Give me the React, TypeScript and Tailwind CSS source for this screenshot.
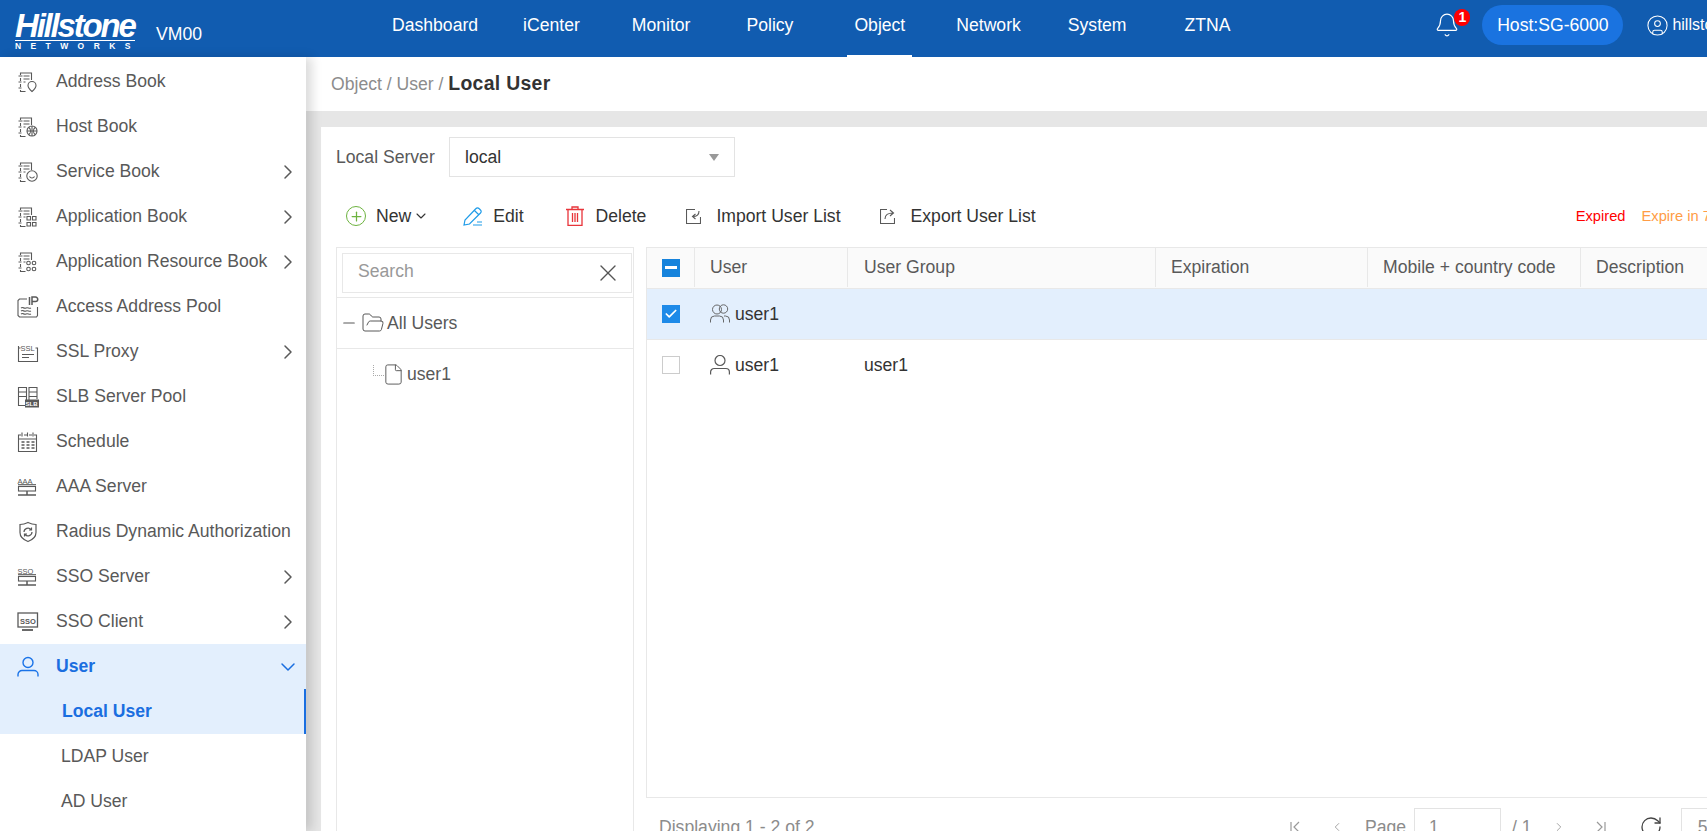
import { ChevronRight, ChevronDown, ChevronLeft, X, Check, Minus, Plus, FolderOpen, File, Bell, CircleUser, RotateCw } from 'lucide-react'
import type { ReactNode } from 'react'

const base = (extra: ReactNode) => (
  <svg width="22" height="22" viewBox="0 0 22 22" fill="none" stroke="#595959" strokeWidth="1.1">
    <path d="M3.5 4V2h11v7M3.5 7v3M3.5 13v3M3.5 19v1.500h5M1.500 5h4M1.500 11h3M1.500 17h3M6.500 5h6M6.500 8h6M6.500 11h2" />
    {extra}
  </svg>
)

const icons: Record<string, ReactNode> = {
  address: base(<path d="M15 10.500a4 4 0 0 1 4 4c0 2.500-4 6-4 6s-4-3.500-4-6a4 4 0 0 1 4-4z" />),
  host: base(<><circle cx="15" cy="15" r="5" /><path d="M10 15h10M15 10v10M12 11.500c2 2 2 5 0 7M18 11.500c-2 2-2 5 0 7" /></>),
  service: base(<><circle cx="15" cy="15" r="5.200" /><path d="M12.500 15.500c1 2 4 2 5 0" /></>),
  app: base(<path d="M10 10.500h3.500v3.500H10zM15.500 10.500H19v3.500h-3.500zM10 16.500h3.500V20H10zM15.500 16.500H19V20h-3.500z" />),
  res: base(<><circle cx="11.500" cy="12" r="1.800" /><circle cx="17" cy="12" r="1.800" /><circle cx="11.500" cy="18" r="1.800" /><circle cx="17" cy="18" r="1.800" /></>),
  pool: (
    <svg width="22" height="22" viewBox="0 0 22 22" fill="none" stroke="#595959" strokeWidth="1.1">
      <path d="M10 3H2.500L1 4.500v15L2.500 21h17l1-1.500V11" />
      <path d="M4 12c2-1.500 3 1 5 0s3 1 5 0M4 15c2-1.500 3 1 5 0s3 1 5 0M4 18c2-1.500 3 1 5 0s3 1 5 0" />
      <path d="M12.500 1v8M15 9V1h3.500a2.200 2.200 0 0 1 0 4.500H15" strokeWidth="1.500" />
    </svg>
  ),
  ssl: (
    <svg width="22" height="22" viewBox="0 0 22 22" fill="none" stroke="#595959" strokeWidth="1.1">
      <path d="M1.500 5v15.500h19V7h-2M1.500 7h2M5 13.500h12M5 16.500h7" />
      <text x="3.500" y="9.500" fontSize="7.500" fill="#595959" stroke="none" fontFamily="Liberation Sans">SSL</text>
    </svg>
  ),
  slb: (
    <svg width="22" height="22" viewBox="0 0 22 22" fill="none" stroke="#595959" strokeWidth="1.1">
      <path d="M1.500 1.500h8v18h-8zM1.500 6h8M1.500 10.500h8M12 17V1.500h8V13M12 6h8M12 10.500h8" />
      <rect x="8" y="13.500" width="14" height="8" fill="#595959" stroke="none" />
      <text x="8.500" y="20" fontSize="6" fontWeight="700" fill="#fff" stroke="none" fontFamily="Liberation Sans">SLB</text>
    </svg>
  ),
  schedule: (
    <svg width="22" height="22" viewBox="0 0 22 22" fill="none" stroke="#595959" strokeWidth="1.1">
      <path d="M4 4H1.500v16.500h18V4H17M7 4h3M12 4h3M5 1.500v4M10.500 1.500v4M16 1.500v4M1.500 8h18" />
      <path d="M4.500 11h3M9.500 11h3M14.500 11h3M4.500 14h3M9.500 14h3M14.500 14h3M4.500 17h3M9.500 17h3M14.500 17h3" strokeWidth="1.500" />
    </svg>
  ),
  aaa: (
    <svg width="22" height="22" viewBox="0 0 22 22" fill="none" stroke="#595959" strokeWidth="1.1">
      <text x="0.500" y="7.500" fontSize="7.500" fill="#595959" stroke="none" fontFamily="Liberation Sans">AAA</text>
      <path d="M1 8.700h18" />
      <rect x="1.500" y="10.500" width="17" height="4.500" />
      <path d="M10 15v3.500M1 19h18" strokeWidth="1.500" />
    </svg>
  ),
  radius: (
    <svg width="22" height="22" viewBox="0 0 22 22" fill="none" stroke="#595959" strokeWidth="1.200">
      <path d="M11 1.500c3 1.500 6 2 8 2v8c0 5-4 7.500-8 9-4-1.500-8-4-8-9v-8c2 0 5-.5 8-2z" />
      <path d="M7 11a4 4 0 0 1 7-2.500M15 11a4 4 0 0 1-7 2.500M14.500 6.500v2.500h-2.500M7.500 15.500V13H10" />
    </svg>
  ),
  ssoServer: (
    <svg width="22" height="22" viewBox="0 0 22 22" fill="none" stroke="#595959" strokeWidth="1.100">
      <text x="0.500" y="7.500" fontSize="7.500" fill="#595959" stroke="none" fontFamily="Liberation Sans">SSO</text>
      <path d="M1 8.700h18" />
      <rect x="1.500" y="10.500" width="17" height="4.500" />
      <path d="M10 15v3.500M1 19h18" strokeWidth="1.500" />
    </svg>
  ),
  ssoClient: (
    <svg width="22" height="22" viewBox="0 0 22 22" fill="none" stroke="#595959" strokeWidth="1.300">
      <rect x="1" y="2" width="19.500" height="14" />
      <path d="M5 19h11" strokeWidth="1.800" />
      <text x="3" y="12.500" fontSize="7.500" fontWeight="700" fill="#595959" stroke="none" fontFamily="Liberation Sans">SSO</text>
    </svg>
  ),
  user: (
    <svg width="22" height="22" viewBox="0 0 22 22" fill="none" stroke="#1a73e8" strokeWidth="1.400">
      <circle cx="11" cy="6.500" r="5" />
      <path d="M1 20.500v-2a4 4 0 0 1 4-4h12a4 4 0 0 1 4 4v2" />
    </svg>
  ),
}

const menu = [
  { label: 'Address Book', icon: 'address' },
  { label: 'Host Book', icon: 'host' },
  { label: 'Service Book', icon: 'service', more: true },
  { label: 'Application Book', icon: 'app', more: true },
  { label: 'Application Resource Book', icon: 'res', more: true },
  { label: 'Access Address Pool', icon: 'pool' },
  { label: 'SSL Proxy', icon: 'ssl', more: true },
  { label: 'SLB Server Pool', icon: 'slb' },
  { label: 'Schedule', icon: 'schedule' },
  { label: 'AAA Server', icon: 'aaa' },
  { label: 'Radius Dynamic Authorization', icon: 'radius' },
  { label: 'SSO Server', icon: 'ssoServer', more: true },
  { label: 'SSO Client', icon: 'ssoClient', more: true },
]

const nav = [
  { label: 'Dashboard', cls: 'border-transparent' },
  { label: 'iCenter', cls: 'ml-[45px] border-transparent' },
  { label: 'Monitor', cls: 'ml-[52px] border-transparent' },
  { label: 'Policy', cls: 'ml-[56px] border-transparent' },
  { label: 'Object', cls: 'ml-[54px] px-[7px] border-white' },
  { label: 'Network', cls: 'ml-[44px] border-transparent' },
  { label: 'System', cls: 'ml-[47px] border-transparent' },
  { label: 'ZTNA', cls: 'ml-[58px] border-transparent' },
]

function Sidebar() {
  return (
    <aside className="w-[306px] shrink-0 bg-white pt-[2px] z-10 shadow-[6px_0_10px_rgba(0,0,0,0.14)] text-[#595959]">
      {menu.map((m) => (
        <div key={m.label} className="h-[45px] flex items-center pl-[17px] pr-[6px]">
          <span className="w-[22px] flex justify-center">{icons[m.icon]}</span>
          <span className="ml-[17px] flex-1 whitespace-nowrap">{m.label}</span>
          {m.more && <ChevronRight size={24} strokeWidth={1.5} className="text-[#595959]" />}
        </div>
      ))}
      <div className="bg-[#e3effd] text-[#1a6ee0] font-bold">
        <div className="h-[45px] flex items-center pl-[17px] pr-[6px]">
          <span className="w-[22px] flex justify-center">{icons.user}</span>
          <span className="ml-[17px] flex-1">User</span>
          <ChevronDown size={24} strokeWidth={1.5} />
        </div>
        <div className="h-[45px] flex items-center pl-[62px] border-r-2 border-[#1a6ee0]">Local User</div>
      </div>
      <div className="h-[45px] flex items-center pl-[61px]">LDAP User</div>
      <div className="h-[45px] flex items-center pl-[61px]">AD User</div>
    </aside>
  )
}

function Box({ children, className }: { children?: ReactNode; className: string }) {
  return <span className={`w-[18px] h-[18px] flex items-center justify-center ${className}`}>{children}</span>
}

function Pager() {
  return (
    <div className="flex items-center mt-[10px] h-[38px] text-[#8c8c8c] whitespace-nowrap">
      <span className="w-[644px] shrink-0 pl-[13px]">Displaying 1 - 2 of 2</span>
      <svg width="10" height="12" viewBox="0 0 10 12" fill="none" stroke="#999" strokeWidth="1.200"><path d="M1 1v10M9 1L4 6l5 5" /></svg>
      <ChevronLeft size={14} strokeWidth={1.5} className="ml-[30px] text-[#999]" />
      <span className="ml-[21px]">Page</span>
      <div className="ml-[8px] self-start shrink-0 w-[87px] h-10 border border-[#e3e3e3] pl-[14px] pt-[5px]">1</div>
      <span className="ml-[11px]">/ 1</span>
      <ChevronRight size={14} strokeWidth={1.5} className="ml-[20px] text-[#999]" />
      <svg className="ml-[30px]" width="10" height="12" viewBox="0 0 10 12" fill="none" stroke="#999" strokeWidth="1.200"><path d="M9 1v10M1 1l5 5-5 5" /></svg>
      <RotateCw size={24} strokeWidth={1.3} className="ml-[33px] text-[#444]" />
      <div className="ml-[18px] self-start shrink-0 w-[80px] h-10 border border-[#e3e3e3] pl-[16px] pt-[5px]">50</div>
    </div>
  )
}

export default function App() {
  return (
    <div className="w-[1707px] h-[831px] overflow-hidden flex flex-col bg-white text-[17.6px] text-[#333] font-['Liberation_Sans',Arial,sans-serif]">
      {/* Header */}
      <header className="h-[57px] shrink-0 bg-[#115cb0] text-white flex items-center whitespace-nowrap">
        <div className="w-[156px] pl-[15px] pt-[5px] shrink-0">
          <div className="italic font-bold text-[33px] leading-[29px] tracking-[-2.2px]">Hillstone</div>
          <div className="w-[120px] border-t border-white text-[8.5px] font-bold leading-[11px] tracking-[9.4px]">NETWORKS</div>
        </div>
        <span className="mt-[12px] w-[236px] shrink-0">VM00</span>
        <nav className="flex h-full">
          {nav.map((n) => (
            <div key={n.label} className={`h-full flex items-center pb-[5px] border-b-2 ${n.cls}`}>
              {n.label}
            </div>
          ))}
        </nav>
        <div className="flex items-center mb-[7px] ml-[204px]">
          <div className="relative w-[26px] h-[26px]">
            <Bell size={26} strokeWidth={1.1} />
            <span className="absolute -top-[3px] left-[20px] w-4 h-[17px] rounded-full bg-[#f00] text-[14px] font-bold leading-[17px] text-center">1</span>
          </div>
          <div className="ml-[22px] h-10 w-[141px] shrink-0 rounded-[20px] bg-[#1a73e0] flex items-center justify-center">Host:SG-6000</div>
          <CircleUser size={23} strokeWidth={1.1} className="ml-[23px] shrink-0" />
          <span className="ml-[3px] text-[16px]">hillstone</span>
        </div>
      </header>

      <div className="flex flex-1 min-h-0">
        <Sidebar />
        <main className="flex-1 min-w-0 flex flex-col bg-[#e6e6e6]">
          <div className="h-[54px] shrink-0 bg-white flex items-center pl-[25px] text-[#8c8c8c] whitespace-nowrap">
            Object / User /&nbsp;<span className="font-bold text-[19.4px] text-[#333] tracking-[0.3px]">Local User</span>
          </div>
          <div className="flex-1 min-h-0 mt-4 ml-[15px] bg-white pl-[15px]">
            {/* Local server select */}
            <div className="flex items-center h-10 mt-[10px]">
              <span className="w-[113px] text-[#595959]">Local Server</span>
              <div className="w-[286px] h-10 border border-[#e3e3e3] flex items-center justify-between pl-[15px] pr-[15px]">
                <span>local</span>
                <span className="w-0 h-0 border-x-[5px] border-t-[7px] border-x-transparent border-t-[#999]" />
              </div>
            </div>

            {/* Toolbar */}
            <div className="w-max h-[42px] mt-[18px] flex items-center whitespace-nowrap">
              <span className="ml-[10px] w-5 h-5 rounded-full border-[1.5px] border-[#6db33f] flex items-center justify-center text-[#6db33f]"><Plus size={15} strokeWidth={2} /></span>
              <span className="ml-[10px]">New</span>
              <ChevronDown size={16} strokeWidth={1.6} className="ml-[2px]" />
              <svg className="ml-[34px]" width="20" height="20" viewBox="0 0 20 20" fill="none" stroke="#1e9be8" strokeWidth="1.200">
                <path d="M1 19l1-5L13 2.500a2 2 0 0 1 3 0l1.500 1.500a2 2 0 0 1 0 3L6.500 18zM11.500 4.500l4.500 4.500M10 19h9M14 16h5" />
              </svg>
              <span className="ml-[10px]">Edit</span>
              <svg className="ml-[42px]" width="18" height="20" viewBox="0 0 18 20" fill="none" stroke="#e8343a" strokeWidth="1.300">
                <path d="M0 3.500h18M6 3V1h6v2M2 4v15.500h14V4M6.500 7v9M9 7v9M11.500 7v9" />
              </svg>
              <span className="ml-[12px]">Delete</span>
              <svg className="ml-[40px]" width="15" height="15" viewBox="0 0 15 15" fill="none" stroke="#595959" strokeWidth="1.100">
                <path d="M9 .5H.5v14h14V8M13 2c0 3-2 5.500-6 5.500M9.500 5l-3 2.500 3 2.500" />
              </svg>
              <span className="ml-[15px]">Import User List</span>
              <svg className="ml-[39px]" width="15" height="15" viewBox="0 0 15 15" fill="none" stroke="#595959" strokeWidth="1.100">
                <path d="M7 .5H.5v14h14V9M5 10c0-4 3-6 8-6M10 1l3.500 3-3.500 3" />
              </svg>
              <span className="ml-[16px]">Export User List</span>
              <span className="ml-[540px] text-[14.7px] text-[#f00]">Expired</span>
              <span className="ml-[16px] text-[14.7px] text-[#ff9c45]">Expire in 7 days</span>
            </div>

            <div className="flex mt-[10px]">
              {/* Tree */}
              <div className="w-[298px] h-[600px] shrink-0 border border-[#e8e8e8]">
                <div className="h-[50px] border-b border-[#e8e8e8] pt-[5px] pl-[5px] pr-[1px]">
                  <div className="h-10 border border-[#e8e8e8] flex items-center justify-between pl-[15px] pr-[9px] text-[#999]">
                    <span className="mb-[3px]">Search</span>
                    <X size={28} strokeWidth={1.2} className="text-[#555]" />
                  </div>
                </div>
                <div className="h-[51px] border-b border-[#e8e8e8] flex items-center pl-[3px] text-[#595959]">
                  <Minus size={18} strokeWidth={1.5} />
                  <FolderOpen size={24} strokeWidth={1} className="ml-[3px]" />
                  <span className="ml-[2px]">All Users</span>
                </div>
                <div className="h-[50px] flex items-center pl-[36px] text-[#595959]">
                  <span className="w-[11px] h-[11px] border-l border-b border-dotted border-[#aaa] mb-[8px]" />
                  <File size={23} strokeWidth={1} className="-ml-[2px]" />
                  <span className="ml-[2px]">user1</span>
                </div>
              </div>

              {/* Table */}
              <div className="ml-[12px] w-[1200px] shrink-0">
                <div className="h-[551px] border border-[#e8e8e8]">
                  <div className="flex h-[41px] pb-px bg-[#fafafa] border-b border-[#e8e8e8] text-[#595959] whitespace-nowrap">
                    <div className="w-[48px] shrink-0 border-r border-[#e8e8e8] flex items-center justify-center">
                      <Box className="bg-[#1683dc]"><span className="w-[12px] h-[3px] bg-white" /></Box>
                    </div>
                    <div className="w-[153px] shrink-0 border-r border-[#e8e8e8] flex items-center pl-[15px]">User</div>
                    <div className="w-[308px] shrink-0 border-r border-[#e8e8e8] flex items-center pl-[16px]">User Group</div>
                    <div className="w-[212px] shrink-0 border-r border-[#e8e8e8] flex items-center pl-[15px]">Expiration</div>
                    <div className="w-[213px] shrink-0 border-r border-[#e8e8e8] flex items-center pl-[15px]">Mobile + country code</div>
                    <div className="flex-1 flex items-center pl-[15px]">Description</div>
                  </div>
                  <div className="flex h-[51px] bg-[#e3effd] border-b border-[#e8e8e8] items-center">
                    <div className="w-[48px] shrink-0 flex justify-center">
                      <Box className="bg-[#1e8ae8]"><Check size={14} strokeWidth={3} className="text-white" /></Box>
                    </div>
                    <div className="pl-[15px] flex items-center gap-[5px]">
                      <svg width="20" height="20" viewBox="0 0 20 20" fill="none" stroke="#595959" strokeWidth="0.900">
                        <circle cx="7" cy="5.500" r="4.500" />
                        <circle cx="13.500" cy="5" r="4.200" />
                        <path d="M.5 18.500V16a4 4 0 0 1 4-4h5a4 4 0 0 1 4 4v2.500M14 12h1.500a4 4 0 0 1 4 4v2.500" />
                      </svg>
                      <span>user1</span>
                    </div>
                  </div>
                  <div className="flex h-[50px] items-center">
                    <div className="w-[48px] shrink-0 flex justify-center">
                      <Box className="border border-[#ccc]" />
                    </div>
                    <div className="w-[153px] shrink-0 pl-[15px] flex items-center gap-[5px]">
                      <svg width="20" height="20" viewBox="0 0 20 20" fill="none" stroke="#595959" strokeWidth="1.200">
                        <circle cx="10" cy="5.500" r="5" />
                        <path d="M.6 19.500V17a3.500 3.500 0 0 1 3.500-3.500h11.800a3.500 3.500 0 0 1 3.500 3.500v2.500" />
                      </svg>
                      <span>user1</span>
                    </div>
                    <div className="pl-[16px]">user1</div>
                  </div>
                </div>
                <Pager />
              </div>
            </div>
          </div>
        </main>
      </div>
    </div>
  )
}
